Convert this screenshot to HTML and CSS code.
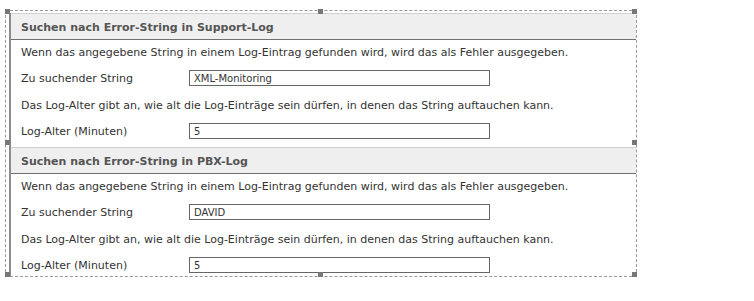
FILE: index.html
```html
<!DOCTYPE html>
<html lang="de">
<head>
    <meta charset="UTF-8">
    <title>Error-String Einstellungen</title>
    <link rel="stylesheet" href="styles.css">
</head>
<body>
    <div class="frame">
        <div class="panel">
            <section class="group">
                <h2 class="group-title">Suchen nach Error-String in Support-Log</h2>
                <div class="group-body">
                    <p class="hint">Wenn das angegebene String in einem Log-Eintrag gefunden wird, wird das als Fehler ausgegeben.</p>
                    <div class="field">
                        <label for="support-string">Zu suchender String</label>
                        <input type="text" id="support-string" value="XML-Monitoring">
                    </div>
                    <p class="hint">Das Log-Alter gibt an, wie alt die Log-Einträge sein dürfen, in denen das String auftauchen kann.</p>
                    <div class="field">
                        <label for="support-age">Log-Alter (Minuten)</label>
                        <input type="text" id="support-age" value="5">
                    </div>
                </div>
            </section>
            <section class="group">
                <h2 class="group-title">Suchen nach Error-String in PBX-Log</h2>
                <div class="group-body">
                    <p class="hint">Wenn das angegebene String in einem Log-Eintrag gefunden wird, wird das als Fehler ausgegeben.</p>
                    <div class="field">
                        <label for="pbx-string">Zu suchender String</label>
                        <input type="text" id="pbx-string" value="DAVID">
                    </div>
                    <p class="hint">Das Log-Alter gibt an, wie alt die Log-Einträge sein dürfen, in denen das String auftauchen kann.</p>
                    <div class="field">
                        <label for="pbx-age">Log-Alter (Minuten)</label>
                        <input type="text" id="pbx-age" value="5">
                    </div>
                </div>
            </section>
        </div>

        <!-- selection handles -->
        <span class="handle tl"></span>
        <span class="handle tm"></span>
        <span class="handle tr"></span>
        <span class="handle ml"></span>
        <span class="handle mr"></span>
        <span class="handle bl"></span>
        <span class="handle bm"></span>
        <span class="handle br"></span>
    </div>
</body>
</html>
```

FILE: styles.css
```css
body {
    margin: 0;
    padding: 0;
    background: #fff;
    font-family: "DejaVu Sans", Verdana, sans-serif;
    font-size: 11px;
    color: #333;
}
.frame {
    position: relative;
    margin: 10px 0 0 5px;
    width: 632px;
    box-sizing: border-box;
    border: 1px dashed #999;
    padding: 2px 0 0 3px;
}
.panel {
    border-left: 2px solid #8c8c8c;
}
.group-title {
    margin: 0;
    height: 23px;
    line-height: 23px;
    padding: 2px 0 0 10px;
    background: #efefef;
    border-top: 1px solid #d0d0d0;
    border-bottom: 1px solid #707070;
    font-size: 11px;
    font-weight: bold;
    color: #555;
}
.group-body {
    padding: 0 0 1px 10px;
}
.group:last-child .group-body {
    padding-bottom: 0;
}
.hint {
    margin: 0;
    height: 18px;
    line-height: 18px;
    padding-top: 4px;
    white-space: nowrap;
}
.field {
    display: flex;
    align-items: flex-start;
    height: 31px;
    box-sizing: border-box;
    padding-top: 8px;
}
.group:last-child .field:last-child {
    height: 27px;
}
.field label {
    width: 168px;
    line-height: 16px;
    padding-top: 1px;
}
.field input {
    width: 301px;
    height: 16px;
    box-sizing: border-box;
    margin: 0;
    padding: 0 4px;
    border: 1px solid #666;
    font-family: "DejaVu Sans", Verdana, sans-serif;
    font-size: 10px;
    color: #333;
    background: #fff;
}
.handle {
    position: absolute;
    width: 5px;
    height: 5px;
    background: #777;
}
.tl { left: -1px; top: -2px; }
.tm { left: 312px; top: -2px; }
.tr { left: 626px; top: -2px; }
.ml { left: -1px; top: 129px; }
.mr { left: 626px; top: 129px; }
.bl { left: -1px; bottom: -1px; }
.bm { left: 312px; bottom: -1px; }
.br { left: 626px; bottom: -1px; }
```
